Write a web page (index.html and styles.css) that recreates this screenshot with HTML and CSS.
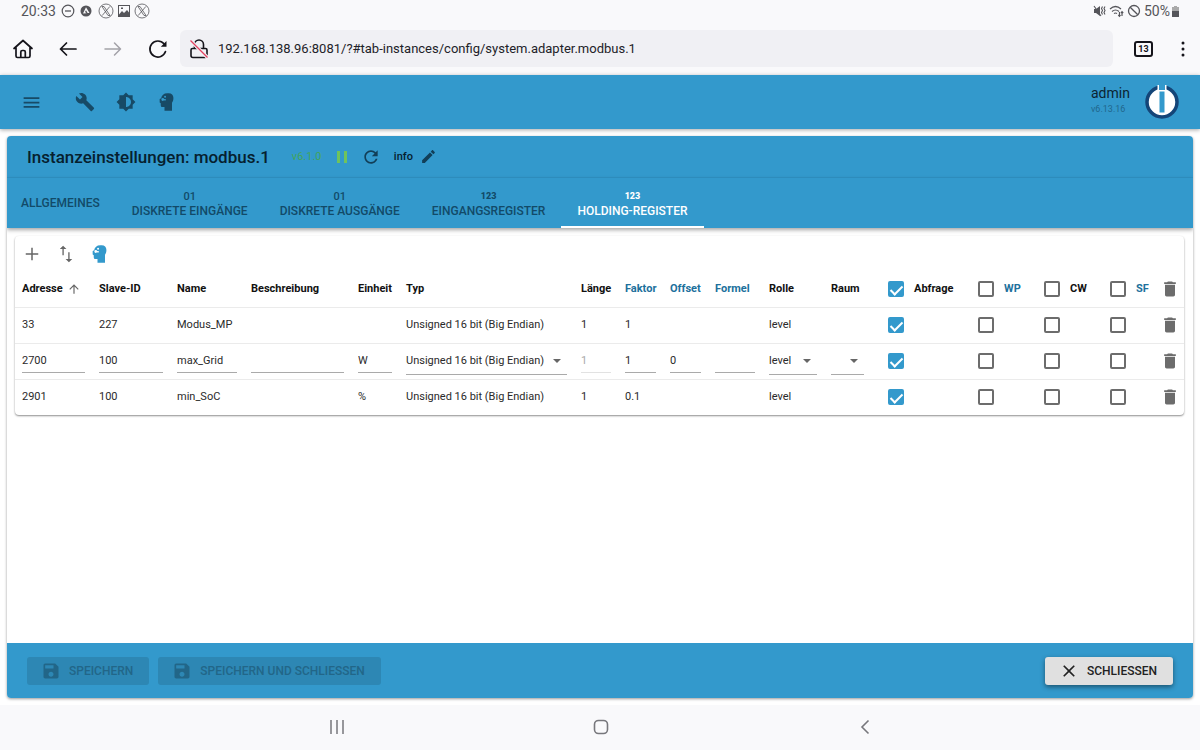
FILE: index.html
```
<!DOCTYPE html>
<html lang="de">
<head>
<meta charset="utf-8">
<meta name="viewport" content="width=device-width, initial-scale=1">
<title>Instanzeinstellungen: modbus.1</title>
<link rel="stylesheet" href="styles.css">
</head>
<body>
<svg class="sprite" aria-hidden="true">
  <symbol id="i-trash" viewBox="0 0 24 24"><path d="M6 19c0 1.100.9 2 2 2h8c1.100 0 2-.9 2-2V7H6v12zM19 4h-3.500l-1-1h-5l-1 1H5v2h14V4z"/></symbol>
  <symbol id="i-save" viewBox="0 0 24 24"><path d="M17 3H5c-1.110 0-2 .9-2 2v14c0 1.100.89 2 2 2h14c1.100 0 2-.9 2-2V7l-4-4zm-5 16c-1.660 0-3-1.340-3-3s1.340-3 3-3 3 1.340 3 3-1.340 3-3 3zm3-10H5V5h10v4z"/></symbol>
  <symbol id="i-head" viewBox="0 0 24 24"><path fill-rule="evenodd" d="M12.500 1.500h1.500c3.500 0 5.700 2.300 5.700 5.700 0 2.500-.7 4-1.700 5.800V22.500H9V18H6.500C5 18 4.500 17 4.500 15.500V13.500L3.200 12.500V8.500L5 7.500C5.500 4 8 1.500 12.500 1.500zM5.200 9a1.700 1.700 0 1 0 3.400 0 1.700 1.700 0 1 0-3.400 0zM8.500 5.800a1.200 1.200 0 1 0 2.400 0 1.200 1.200 0 1 0-2.400 0zM8.500 8.500h2v1.800h-2z"/></symbol>
  <symbol id="i-x" viewBox="0 0 16 16"><g fill="none" stroke="currentColor" stroke-width="0.800"><circle cx="8" cy="8" r="7"/><path d="M4 3.500h2l6 9h-2zM11.800 3.500 4.200 12.500"/></g></symbol>
</svg>

<div class="status">
  <span>20:33</span>
  <svg width="14" height="14" viewBox="0 0 14 14"><circle cx="7" cy="7" r="5.800" fill="none" stroke="currentColor" stroke-width="1.200"/><path d="M4 7h6" stroke="currentColor" stroke-width="1.300"/></svg>
  <svg class="gap-s" width="12" height="12" viewBox="0 0 12 12"><circle cx="6" cy="6" r="5.500" fill="currentColor"/><path d="M6 2.200 9.500 8H7.600L6 5.200 5 7l1.600 1.200L3 8.600z" fill="#f9f9fb"/></svg>
  <svg width="16" height="16"><use href="#i-x"/></svg>
  <svg width="14" height="14" viewBox="0 0 14 14"><path fill="currentColor" fill-rule="evenodd" d="M1 1h12v12H1zM2 2v8.500l3-3.500 2 2 3-3 2 2.500V2zM4 3.500h2v1.500H4z"/></svg>
  <svg width="16" height="16"><use href="#i-x"/></svg>
  <span class="grow"></span>
  <svg width="13" height="14" viewBox="0 0 13 14"><path fill="currentColor" d="M1 5h2l4-3v10L3 9H1z"/><path d="M1 2l7 10M9.500 2.500l-1 2 1 2-1 2 1 2M12 2.500l-1 2 1 2-1 2 1 2" fill="none" stroke="currentColor" stroke-width="1.100"/></svg>
  <svg width="15" height="14" viewBox="0 0 15 14"><g fill="none" stroke="currentColor" stroke-width="1.200"><path d="M1 5q5.500-5 11 0M3 7.500q3.500-3 7 0M5 9.500q1.500-1 3 0M10.500 8v4M13 12V8M9.300 11l1.200 1.400 1-1.400M12 9l1-1.400L14.200 9"/></g></svg>
  <svg width="14" height="14" viewBox="0 0 14 14"><g fill="none" stroke="currentColor" stroke-width="1.300"><circle cx="7" cy="7" r="5.500"/><path d="M3.200 3.200l7.600 7.600"/></g></svg>
  <span class="battery">50%<svg width="9" height="13" viewBox="0 0 9 13"><path fill="#aaa" d="M3 1h3v1h2v5H1V2h2z"/><path fill="currentColor" d="M1 6h7v5.500q0 .5-.5.500h-6Q1 12 1 11.500z"/></svg></span>
</div>

<div class="browser">
  <button class="nav-btn" aria-label="Startseite"><svg width="22" height="22" viewBox="0 0 22 22"><g fill="none" stroke="#15141a" stroke-width="1.700" stroke-linejoin="round" stroke-linecap="round"><path d="M2 10.500 11 2.500l9 8M4 9.500V18q0 1.500 1.500 1.500h11Q18 19.500 18 18V9.500M8.800 19v-5q0-1.500 1.500-1.500h1.500q1.500 0 1.500 1.500v5"/></g></svg></button>
  <button class="nav-btn" aria-label="Zurück"><svg width="20" height="20" viewBox="0 0 20 20"><path d="M18 10H2.500M8.500 4l-6 6 6 6" fill="none" stroke="#15141a" stroke-width="1.700" stroke-linecap="round" stroke-linejoin="round"/></svg></button>
  <button class="nav-btn" aria-label="Vor"><svg width="20" height="20" viewBox="0 0 20 20"><path d="M2 10h15.500M11.500 4l6 6-6 6" fill="none" stroke="#a3a2a8" stroke-width="1.500" stroke-linecap="round" stroke-linejoin="round"/></svg></button>
  <button class="nav-btn" aria-label="Neu laden"><svg width="20" height="20" viewBox="0 0 20 20"><path d="M17.500 12.500A8 8 0 1 1 16 4.800" fill="none" stroke="#15141a" stroke-width="1.700" stroke-linecap="round"/><path d="M18.500 2v5.700h-5.700z" fill="#15141a"/></svg></button>
  <div class="url">
    <svg width="20" height="22" viewBox="0 0 20 22"><path d="M3.500 10.500h13q1.500 0 1.500 1.500v5.500q0 2-2 2H4q-2 0-2-2V12q0-1.500 1.500-1.500zM5.500 10V6.500a4.500 4.500 0 0 1 9 0V10" fill="none" stroke="#15141a" stroke-width="1.600"/><path d="M2 3l17 17" stroke="#f0f0f4" stroke-width="3.500"/><path d="M1.500 2.500l17 17" stroke="#e4405f" stroke-width="1.300"/></svg>
    <input class="url-input" type="text" aria-label="Adresse" value="192.168.138.96:8081/?#tab-instances/config/system.adapter.modbus.1">
  </div>
  <button class="count" aria-label="13 Tabs">13</button>
  <button class="nav-btn more" aria-label="Menü"><svg width="4" height="18" viewBox="0 0 4 18"><g fill="#15141a"><circle cx="2" cy="3" r="1.500"/><circle cx="2" cy="9" r="1.500"/><circle cx="2" cy="15" r="1.500"/></g></svg></button>
</div>

<header class="appbar">
  <button class="app-btn menu" aria-label="Menü öffnen"><svg width="21" height="21" viewBox="0 0 24 24"><path fill="currentColor" d="M3 18h18v-2H3v2zm0-5h18v-2H3v2zm0-7v2h18V6H3z"/></svg></button>
  <button class="app-btn" aria-label="Einstellungen"><svg width="20" height="20" viewBox="0 0 24 24"><path fill="currentColor" d="M22.700 19l-9.100-9.100c.9-2.300.4-5-1.500-6.900-2-2-5-2.400-7.400-1.300L9 6 6 9 1.600 4.700C.4 7.100.9 10.100 2.900 12.100c1.900 1.900 4.600 2.400 6.900 1.500l9.100 9.100c.4.400 1 .4 1.400 0l2.300-2.300c.5-.4.5-1.100.1-1.400z"/></svg></button>
  <button class="app-btn" aria-label="Farbschema"><svg width="20" height="20" viewBox="0 0 24 24"><path fill="currentColor" d="M20 15.310L23.310 12 20 8.690V4h-4.690L12 .69 8.690 4H4v4.690L.69 12 4 15.310V20h4.690L12 23.310 15.310 20H20v-4.690zM12 18V6c3.310 0 6 2.690 6 6s-2.690 6-6 6z"/></svg></button>
  <button class="app-btn" aria-label="Expertenmodus"><svg width="20" height="20" fill="currentColor"><use href="#i-head"/></svg></button>
  <span class="grow"></span>
  <div class="user"><span class="user-name">admin</span><span class="user-ver">v6.13.16</span></div>
  <svg class="logo" width="34" height="34" viewBox="0 0 34 34"><circle cx="17" cy="17" r="15" fill="#fff" stroke="#144578" stroke-width="3.500"/><path fill="#fff" d="M12.500 0h9v6h-9z"/><path fill="#3399cc" d="M14 0h6v5h-6zM14.500 6.500h5v21h-5z"/></svg>
</header>

<main class="page">
  <section class="card">
    <div class="title-row">
      <h1>Instanzeinstellungen: modbus.1</h1>
      <span class="version">v6.1.0</span>
      <button class="mini" aria-label="Pausieren"><svg width="12" height="14" viewBox="0 0 12 14"><path fill="#6fc35c" d="M1 1h3v12H1zM8 1h3v12H8z"/></svg></button>
      <button class="mini" aria-label="Neu starten"><svg width="20" height="20" viewBox="0 0 24 24"><path fill="currentColor" d="M17.650 6.350C16.200 4.900 14.210 4 12 4c-4.420 0-7.990 3.580-7.990 8s3.570 8 7.990 8c3.730 0 6.840-2.550 7.730-6h-2.080c-.82 2.330-3.040 4-5.650 4-3.310 0-6-2.690-6-6s2.690-6 6-6c1.660 0 3.140.69 4.220 1.780L13 11h7V4l-2.350 2.350z"/></svg></button>
      <span class="info">info</span>
      <button class="mini" aria-label="Bearbeiten"><svg width="17" height="17" viewBox="0 0 24 24"><path fill="currentColor" d="M3 17.250V21h3.750L17.810 9.940l-3.750-3.750L3 17.250zM20.710 7.040c.39-.39.39-1.020 0-1.410l-2.340-2.340c-.39-.39-1.020-.39-1.410 0l-1.830 1.830 3.750 3.750 1.830-1.830z"/></svg></button>
    </div>
    <nav class="tabs">
      <button class="tab plain">ALLGEMEINES</button>
      <button class="tab"><span class="tab-icon">01</span>DISKRETE EINGÄNGE</button>
      <button class="tab"><span class="tab-icon">01</span>DISKRETE AUSGÄNGE</button>
      <button class="tab"><span class="tab-icon bold">123</span>EINGANGSREGISTER</button>
      <button class="tab active"><span class="tab-icon bold">123</span>HOLDING-REGISTER</button>
    </nav>

    <div class="content">
      <div class="paper">
        <div class="tools">
          <button class="tool" aria-label="Hinzufügen"><svg width="20" height="20" viewBox="0 0 24 24"><path fill="currentColor" d="M19.500 12.900h-6.600v6.600h-1.800v-6.600H4.500v-1.800h6.600V4.500h1.800v6.600h6.600z"/></svg></button>
          <button class="tool" aria-label="Import und Export"><svg width="20" height="20" viewBox="0 0 24 24"><path fill="currentColor" d="M8.500 2L4.500 6h3.200V13.500h1.600V6h3.200zM16.300 18V10h-1.600v8h-3.200l4 4 4-4z"/></svg></button>
          <button class="tool" aria-label="Experte"><svg width="20" height="20" fill="#3399cc"><use href="#i-head"/></svg></button>
        </div>
        <table class="grid">
          <colgroup>
            <col class="c77"><col class="c78"><col class="c74"><col class="c107"><col class="c48"><col class="c175"><col class="c44"><col class="c45"><col class="c45"><col class="c54"><col class="c62"><col class="c47"><col class="c90"><col class="c66"><col class="c66"><col class="c62"><col class="c29">
          </colgroup>
          <thead>
            <tr>
              <th><span class="sort">Adresse<svg width="14" height="14" viewBox="0 0 24 24"><path fill="#666" d="M4 12l1.410 1.410L11 7.830V20h2V7.830l5.580 5.590L20 12l-8-8-8 8z"/></svg></span></th>
              <th>Slave-ID</th><th>Name</th><th>Beschreibung</th><th>Einheit</th><th>Typ</th><th>Länge</th>
              <th class="link">Faktor</th><th class="link">Offset</th><th class="link">Formel</th><th>Rolle</th><th>Raum</th>
              <th><label class="check"><input type="checkbox" checked>Abfrage</label></th>
              <th class="link"><label class="check"><input type="checkbox">WP</label></th>
              <th><label class="check"><input type="checkbox">CW</label></th>
              <th class="link"><label class="check"><input type="checkbox">SF</label></th>
              <th class="del"><button aria-label="Alle löschen"><svg width="20" height="20"><use href="#i-trash"/></svg></button></th>
            </tr>
          </thead>
          <tbody>
            <tr>
              <td>33</td><td>227</td><td>Modus_MP</td><td></td><td></td><td>Unsigned 16 bit (Big Endian)</td><td>1</td><td>1</td><td></td><td></td><td>level</td><td></td>
              <td><span class="check"><input type="checkbox" aria-label="Abfrage 33" checked></span></td>
              <td><span class="check"><input type="checkbox" aria-label="WP 33"></span></td>
              <td><span class="check"><input type="checkbox" aria-label="CW 33"></span></td>
              <td><span class="check"><input type="checkbox" aria-label="SF 33"></span></td>
              <td class="del"><button aria-label="33 löschen"><svg width="20" height="20"><use href="#i-trash"/></svg></button></td>
            </tr>
            <tr>
              <td><input class="field" type="text" aria-label="Adresse" value="2700"></td>
              <td><input class="field" type="text" aria-label="Slave-ID" value="100"></td>
              <td><input class="field" type="text" aria-label="Name" value="max_Grid"></td>
              <td><input class="field" type="text" aria-label="Beschreibung"></td>
              <td><input class="field" type="text" aria-label="Einheit" value="W"></td>
              <td><span class="pick"><select aria-label="Typ"><option>Unsigned 16 bit (Big Endian)</option></select></span></td>
              <td><input class="field" type="text" aria-label="Länge" value="1" disabled></td>
              <td><input class="field" type="text" aria-label="Faktor" value="1"></td>
              <td><input class="field" type="text" aria-label="Offset" value="0"></td>
              <td><input class="field" type="text" aria-label="Formel"></td>
              <td><span class="pick"><select aria-label="Rolle"><option>level</option></select></span></td>
              <td><span class="pick"><select aria-label="Raum"><option></option></select></span></td>
              <td><span class="check"><input type="checkbox" aria-label="Abfrage 2700" checked></span></td>
              <td><span class="check"><input type="checkbox" aria-label="WP 2700"></span></td>
              <td><span class="check"><input type="checkbox" aria-label="CW 2700"></span></td>
              <td><span class="check"><input type="checkbox" aria-label="SF 2700"></span></td>
              <td class="del"><button aria-label="2700 löschen"><svg width="20" height="20"><use href="#i-trash"/></svg></button></td>
            </tr>
            <tr>
              <td>2901</td><td>100</td><td>min_SoC</td><td></td><td>%</td><td>Unsigned 16 bit (Big Endian)</td><td>1</td><td>0.1</td><td></td><td></td><td>level</td><td></td>
              <td><span class="check"><input type="checkbox" aria-label="Abfrage 2901" checked></span></td>
              <td><span class="check"><input type="checkbox" aria-label="WP 2901"></span></td>
              <td><span class="check"><input type="checkbox" aria-label="CW 2901"></span></td>
              <td><span class="check"><input type="checkbox" aria-label="SF 2901"></span></td>
              <td class="del"><button aria-label="2901 löschen"><svg width="20" height="20"><use href="#i-trash"/></svg></button></td>
            </tr>
          </tbody>
        </table>
      </div>
    </div>

    <footer class="actions">
      <button class="btn" disabled><svg width="20" height="20" fill="currentColor"><use href="#i-save"/></svg>SPEICHERN</button>
      <button class="btn" disabled><svg width="20" height="20" fill="currentColor"><use href="#i-save"/></svg>SPEICHERN UND SCHLIESSEN</button>
      <span class="grow"></span>
      <button class="btn close"><svg width="20" height="20" viewBox="0 0 24 24"><path fill="currentColor" d="M19 6.410L17.590 5 12 10.590 6.410 5 5 6.410 10.590 12 5 17.590 6.410 19 12 13.410 17.590 19 19 17.590 13.410 12z"/></svg>SCHLIESSEN</button>
    </footer>
  </section>
</main>

<div class="sysnav">
  <button aria-label="Letzte Apps"><svg width="16" height="16" viewBox="0 0 16 16"><path d="M2 1v14M8 1v14M14 1v14" stroke="currentColor" stroke-width="1.500"/></svg></button>
  <button aria-label="Start"><svg width="16" height="16" viewBox="0 0 16 16"><rect x="1.500" y="1.500" width="13" height="13" rx="4" fill="none" stroke="currentColor" stroke-width="1.600"/></svg></button>
  <button aria-label="Zurück"><svg width="16" height="16" viewBox="0 0 16 16"><path d="M11.500 1.500 5 8l6.500 6.500" fill="none" stroke="currentColor" stroke-width="1.600"/></svg></button>
</div>
</body>
</html>
```
FILE: styles.css
```
* { box-sizing: border-box; }

body {
  margin: 0;
  min-height: 100vh;
  display: flex;
  flex-direction: column;
  background: #fff;
  color: #2a2a2a;
  font-family: Roboto, "Liberation Sans", sans-serif;
  font-size: 11px;
}

button, input, select { font: inherit; color: inherit; }
button { border: 0; background: none; padding: 0; cursor: pointer; }
svg { display: block; flex: none; }
.sprite { position: absolute; width: 0; height: 0; }
.grow { flex: 1; }

/* Device status bar */
.status {
  display: flex;
  align-items: center;
  gap: 3px;
  height: 22px;
  padding: 0 20px 0 21px;
  background: #f9f9fb;
  color: #55555a;
  font-size: 14px;
}
.status > span:first-child { margin-right: 2px; }
.gap-s { margin: 0 3px 0 2px; }
.battery { display: flex; align-items: center; gap: 1px; }

/* Browser toolbar */
.browser {
  display: flex;
  align-items: center;
  height: 53px;
  padding: 0 13px 0 0;
  background: #f9f9fb;
}
.nav-btn { width: 45px; height: 37px; display: grid; place-items: center; }
.url {
  flex: 1;
  display: flex;
  align-items: center;
  gap: 9px;
  height: 37px;
  padding: 0 9px;
  border-radius: 6px;
  background: #f0f0f4;
}
.url-input {
  flex: 1;
  border: 0;
  padding: 0;
  background: none;
  outline: 0;
  color: #222228;
  font-size: 13px;
}
.count {
  width: 19px;
  height: 16px;
  margin-left: 21px;
  border: 2px solid #15141a;
  border-radius: 3px;
  color: #15141a;
  font-size: 9px;
  font-weight: 700;
  line-height: 12px;
}
.more { width: 8px; margin-left: 26px; }

/* Application bar */
.appbar {
  display: flex;
  align-items: center;
  height: 54px;
  padding: 0 21px 0 20px;
  background: #3399cc;
  color: #174a66;
  box-shadow: 0 1px 4px rgba(0, 0, 0, 0.35);
}
.app-btn { width: 41px; height: 40px; display: grid; place-items: center; }
.menu { width: 22px; margin-right: 22px; }
.user { display: flex; flex-direction: column; width: 38px; margin-right: 16px; padding-bottom: 5px; white-space: nowrap; }
.user-name { color: #0b2433; font-size: 14px; line-height: 18px; }
.user-ver { color: #21678c; font-size: 9px; line-height: 14px; }

/* Settings card */
.page { flex: 1; display: flex; padding: 7px; }
.card {
  flex: 1;
  display: flex;
  flex-direction: column;
  min-width: 0;
  border-radius: 4px;
  overflow: hidden;
  background: #fff;
  box-shadow: 0 1px 3px rgba(0, 0, 0, 0.4);
}
.title-row {
  display: flex;
  align-items: center;
  height: 42px;
  padding: 0 20px;
  border-bottom: 1px solid #2f92c4;
  background: #3399cc;
  color: #123f58;
}
h1 { margin: 0; color: #06202e; font-size: 17px; font-weight: 500; line-height: 24px; }
.version { width: 44px; margin-left: 22px; color: #43a55c; }
.mini { height: 24px; display: grid; place-items: center; margin-right: 13px; }
.info { margin-right: 7px; color: #06202e; font-weight: 500; }

.tabs {
  display: flex;
  height: 50px;
  background: #3399cc;
  box-shadow: 0 2px 4px rgba(0, 0, 0, 0.35);
  z-index: 1;
}
.tab {
  display: flex;
  flex-direction: column;
  align-items: center;
  justify-content: center;
  padding: 4px 16px 0;
  color: #124a68;
  font-size: 12px;
  font-weight: 500;
  line-height: 16px;
  border-bottom: 2px solid transparent;
}
.tab.plain { padding: 2px 16px 0 14px; }
.tab.active { color: #fff; border-bottom-color: #fff; }
.tab-icon { font-size: 11px; line-height: 13px; }
.tab-icon.bold { font-size: 9px; font-weight: 900; }

.content { flex: 1; padding: 8px 9px 8px 8px; }
.paper { border-radius: 4px; box-shadow: 0 1px 2px rgba(0, 0, 0, 0.45); }
.tools { display: flex; gap: 14px; height: 35px; align-items: center; padding: 0 7px; color: #666; }

/* Register table */
.grid { width: 100%; table-layout: fixed; border-collapse: collapse; line-height: 14px; }
.c77 { width: 77px; } .c78 { width: 78px; } .c74 { width: 74px; } .c107 { width: 107px; }
.c48 { width: 48px; } .c175 { width: 175px; } .c44 { width: 44px; } .c45 { width: 45px; }
.c54 { width: 54px; } .c62 { width: 62px; } .c47 { width: 47px; } .c90 { width: 90px; }
.c66 { width: 66px; } .c29 { width: 29px; }
.grid th, .grid td { height: 36px; padding: 0 7px; text-align: left; white-space: nowrap; border-bottom: 1px solid #ebebeb; }
.grid tbody tr:last-child td { border-bottom: 0; }
.grid th { color: #111; font-weight: 700; }
.grid th.link { color: #20709c; }
.sort { display: flex; align-items: center; gap: 4px; }
.check { display: flex; align-items: center; gap: 10px; padding-left: 10px; }
.check input {
  appearance: none;
  flex: none;
  display: grid;
  place-items: center;
  width: 16px;
  height: 16px;
  margin: 0;
  border: 2px solid #6c6c6c;
  border-radius: 2px;
}
.check input:checked { border-color: #3399cc; background: #3399cc; }
.check input:checked::after {
  content: "";
  width: 5px;
  height: 10px;
  margin-bottom: 3px;
  border: solid #fff;
  border-width: 0 2px 2px 0;
  transform: rotate(45deg);
}
.grid .del { padding: 0; }
.del button { display: block; margin: 0 auto; }
.del svg { fill: #6c6c6c; }

.field, .pick select {
  display: block;
  width: 100%;
  height: 24px;
  padding: 0;
  border: 0;
  border-bottom: 1px solid #aaa;
  border-radius: 0;
  background: none;
  outline: 0;
}
.field:disabled { color: #aaa; border-bottom-color: #e2e2e2; }
.pick { display: grid; align-items: center; }
.pick select { grid-area: 1 / 1; appearance: none; height: 27px; }
.pick::after {
  content: "";
  grid-area: 1 / 1;
  justify-self: end;
  margin-right: 6px;
  border: 4px solid transparent;
  border-top-color: #666;
  border-bottom: 0;
  pointer-events: none;
}

/* Action bar */
.actions {
  display: flex;
  align-items: center;
  gap: 9px;
  height: 55px;
  padding: 0 20px;
  background: #3399cc;
}
.btn {
  display: flex;
  align-items: center;
  gap: 8px;
  height: 28px;
  padding: 0 16px 0 14px;
  border-radius: 3px;
  font-size: 12px;
  font-weight: 500;
  white-space: nowrap;
}
.btn:disabled { background: #2d87b4; color: #226688; }
.btn.close { background: #e0e0e0; color: #222; box-shadow: 0 2px 5px rgba(0, 0, 0, 0.45); }

/* Device navigation bar */
.sysnav {
  display: flex;
  justify-content: center;
  align-items: center;
  gap: 248px;
  height: 45px;
  padding: 0 0 2px 2px;
  background: #f9f9fb;
  color: #77777c;
}
```
